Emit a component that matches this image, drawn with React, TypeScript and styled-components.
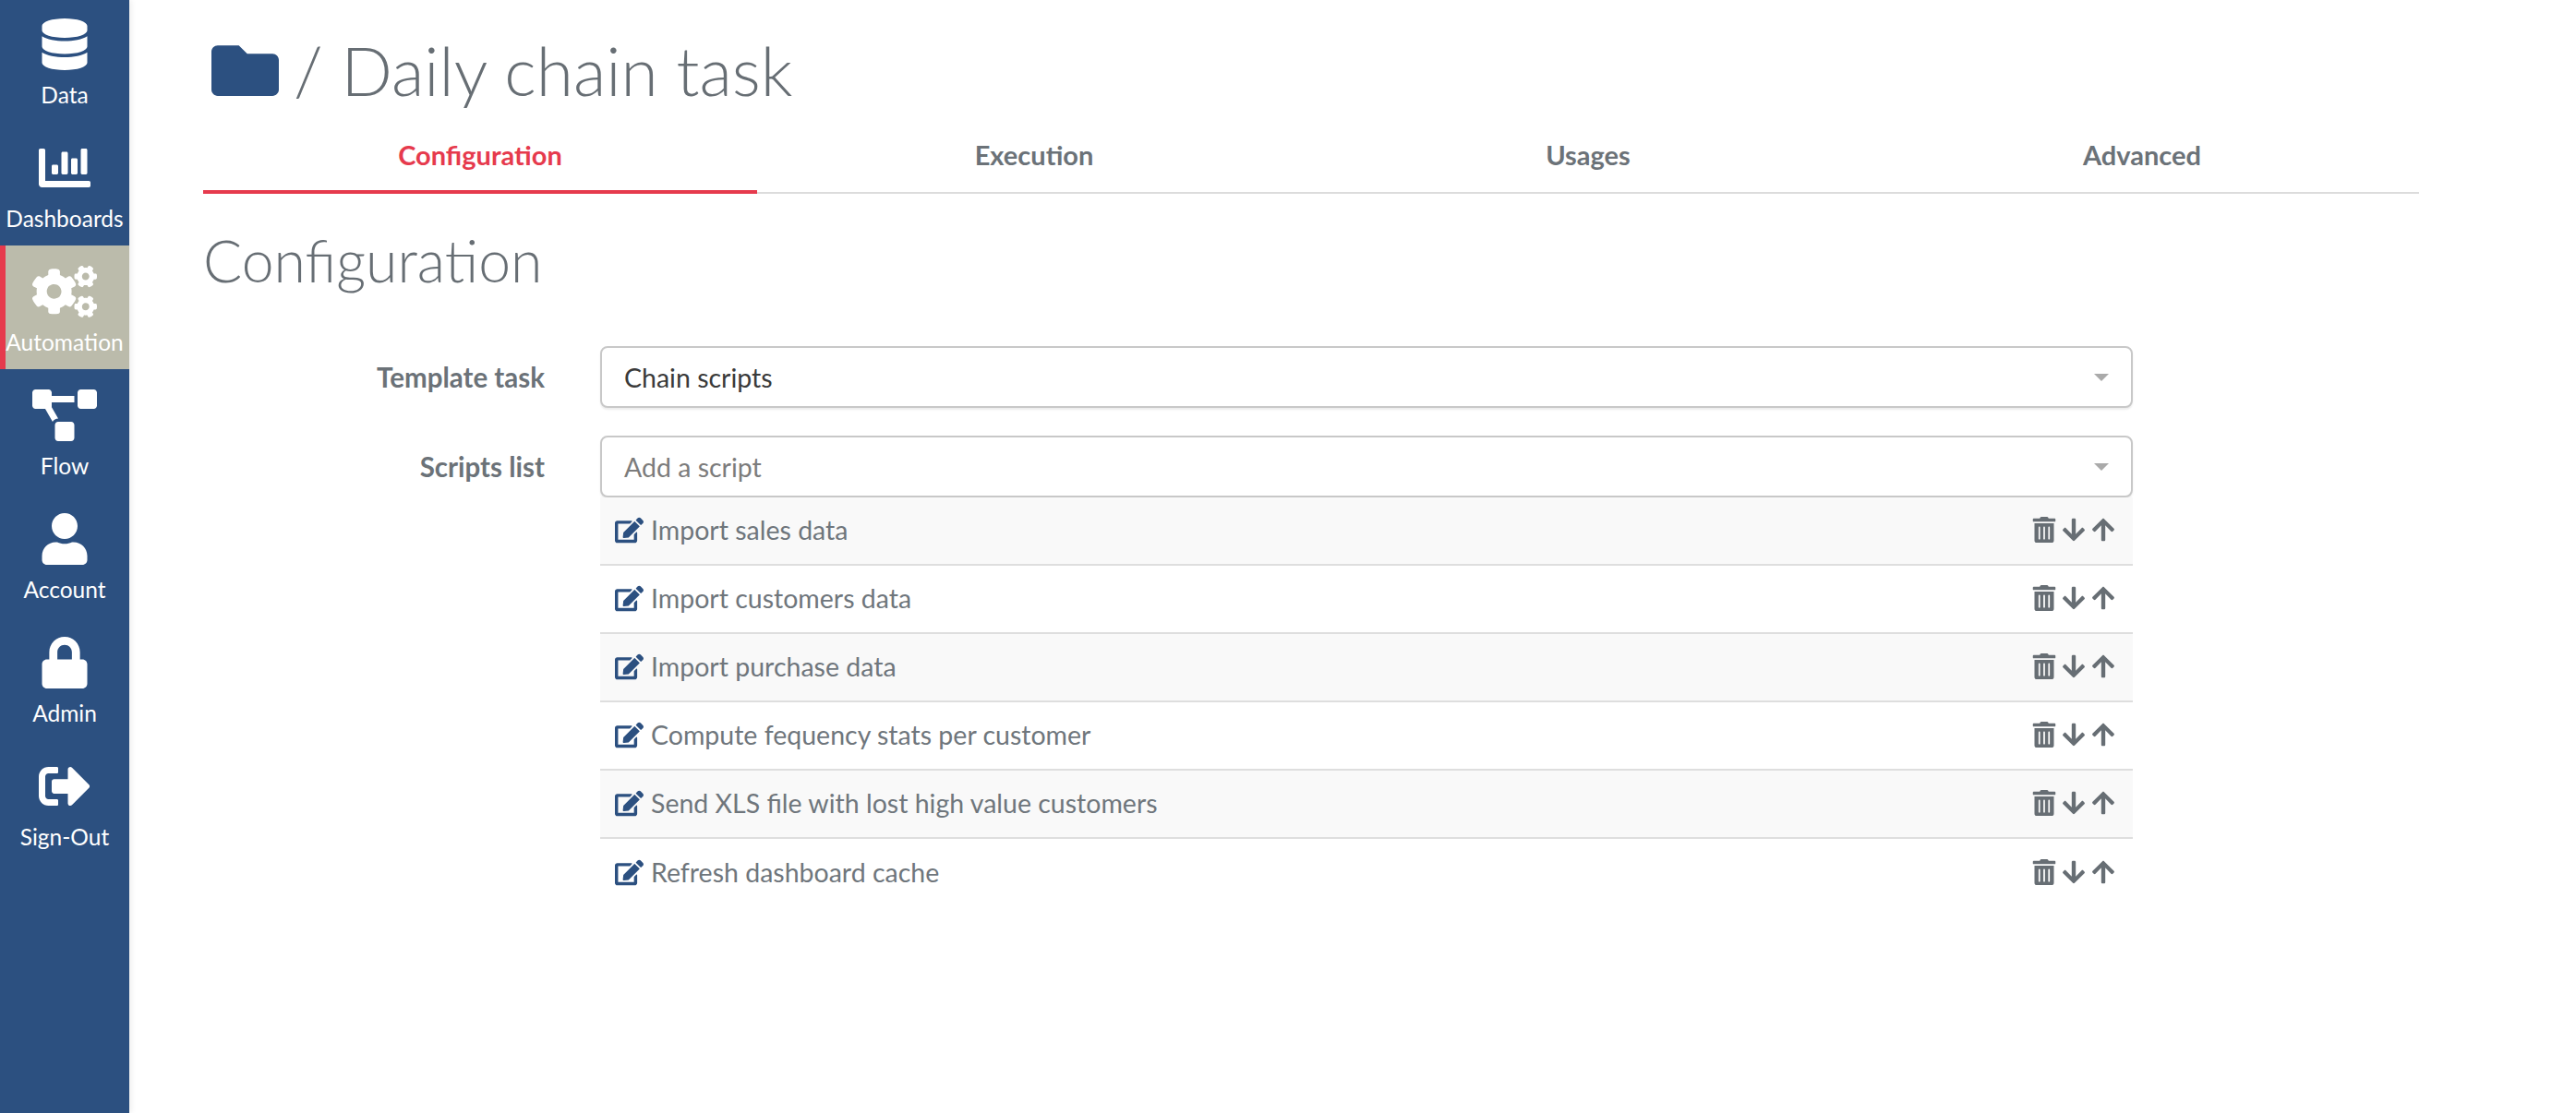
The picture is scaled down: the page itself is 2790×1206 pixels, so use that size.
import React from 'react';
import styled, { createGlobalStyle } from 'styled-components';
import {
  FaArrowDown,
  FaArrowUp,
  FaChartBar,
  FaCogs,
  FaDatabase,
  FaEdit,
  FaFolder,
  FaLock,
  FaProjectDiagram,
  FaSignOutAlt,
  FaTrashAlt,
  FaUser,
} from 'react-icons/fa';

const GlobalStyle = createGlobalStyle`
  html, body {
    margin: 0;
    padding: 0;
    background: #fff;
    font-family: Lato, "Open Sans", sans-serif;
    overflow: hidden;
  }
  * { box-sizing: border-box; }
`;

const Page = styled.div`
  display: flex;
  height: 1206px;
  width: 2790px;
`;

const Sidebar = styled.nav`
  width: 140px;
  flex-shrink: 0;
  background: #2c5080;
  box-shadow: 2px 0 6px rgba(0, 0, 0, 0.08);
  display: flex;
  flex-direction: column;
  overflow: hidden;
`;

const NavList = styled.div`
  display: flex;
  flex-direction: column;
  margin-top: -2px;
`;

const NavItem = styled.a<{ $active?: boolean }>`
  height: 134px;
  flex-shrink: 0;
  display: flex;
  flex-direction: column;
  align-items: center;
  padding-top: 20px;
  color: #fff;
  font-size: 24.5px;
  line-height: 30px;
  white-space: nowrap;
  background: ${({ $active }) => ($active ? '#bbbbab' : 'transparent')};
  border-left: ${({ $active }) => ($active ? '6px solid #e63a4d' : 'none')};
  padding-right: ${({ $active }) => ($active ? '6px' : '0')};
`;

const NavIcon = styled.span<{ $wide?: boolean }>`
  height: 60px;
  margin-bottom: 10px;
  display: flex;
  align-items: center;
  justify-content: center;
  font-size: ${({ $wide }) => ($wide ? '70px' : '56px')};
`;

const Main = styled.main`
  flex: 1;
  padding-left: 80px;
`;

const Title = styled.h1`
  margin: 0;
  height: 120px;
  padding: 32px 0 0 9px;
  display: flex;
  align-items: center;
  gap: 16px;
  font-size: 73px;
  line-height: 84px;
  font-weight: 300;
  color: #676e74;
`;

const FolderIcon = styled(FaFolder)`
  color: #2c5080;
  font-size: 73px;
`;

const Tabs = styled.div`
  width: 2400px;
  height: 90px;
  display: grid;
  grid-template-columns: repeat(4, 1fr);
  border-bottom: 2px solid #dcdcdc;
`;

const Tab = styled.div<{ $active?: boolean }>`
  height: 90px;
  padding: 8px 0 ${({ $active }) => ($active ? '0' : '4px')};
  display: flex;
  align-items: center;
  justify-content: center;
  font-size: 29px;
  font-weight: 700;
  color: ${({ $active }) => ($active ? '#e63a4d' : '#6b7278')};
  border-bottom: ${({ $active }) => ($active ? '4px solid #e63a4d' : 'none')};
`;

const Heading = styled.h2`
  margin: 40px 0 61px;
  font-size: 62.5px;
  line-height: 64px;
  font-weight: 300;
  color: #676e74;
`;

const FormRow = styled.div`
  display: flex;
  align-items: flex-start;
  margin-bottom: 30px;
`;

const Label = styled.label`
  width: 370px;
  height: 66px;
  margin-right: 60px;
  display: flex;
  align-items: center;
  justify-content: flex-end;
  font-size: 29.5px;
  font-weight: 700;
  color: #6b7278;
`;

const Field = styled.div`
  width: 1660px;
`;

const Select = styled.div<{ $placeholder?: boolean }>`
  height: 67px;
  padding: 0 24px;
  display: flex;
  align-items: center;
  justify-content: space-between;
  background: #fff;
  border: 2px solid #c8c8c8;
  border-radius: 8px;
  box-shadow: 0 2px 2px rgba(0, 0, 0, 0.08);
  font-size: 28.5px;
  color: ${({ $placeholder }) => ($placeholder ? '#7c7c7c' : '#3a3a3a')};
`;

const Caret = styled.span`
  width: 0;
  height: 0;
  border-left: 8px solid transparent;
  border-right: 8px solid transparent;
  border-top: 8px solid #aaa;
`;

const ScriptRow = styled.div<{ $striped: boolean }>`
  height: 74px;
  padding: 0 18px 2px 16px;
  display: flex;
  align-items: center;
  justify-content: space-between;
  background: ${({ $striped }) => ($striped ? '#f9f9f9' : '#fff')};
  border-bottom: 2px solid #dedede;
  font-size: 28.5px;
  color: #6f767c;

  &:last-child {
    border-bottom: none;
  }
`;

const ScriptName = styled.div`
  display: flex;
  align-items: center;
  gap: 8px;
`;

const EditIcon = styled(FaEdit)`
  color: #2c5080;
  font-size: 31px;
`;

const Actions = styled.div`
  display: flex;
  align-items: center;
  gap: 4px;
  font-size: 28px;
  color: #676e74;
`;

const navItems = [
  { label: 'Data', icon: <FaDatabase /> },
  { label: 'Dashboards', icon: <FaChartBar /> },
  { label: 'Automation', icon: <FaCogs />, active: true, wide: true },
  { label: 'Flow', icon: <FaProjectDiagram />, wide: true },
  { label: 'Account', icon: <FaUser /> },
  { label: 'Admin', icon: <FaLock /> },
  { label: 'Sign-Out', icon: <FaSignOutAlt /> },
];

const tabs = ['Configuration', 'Execution', 'Usages', 'Advanced'];

const scripts = [
  'Import sales data',
  'Import customers data',
  'Import purchase data',
  'Compute fequency stats per customer',
  'Send XLS file with lost high value customers',
  'Refresh dashboard cache',
];

export default function App() {
  return (
    <Page>
      <GlobalStyle />
      <Sidebar>
        <NavList>
          {navItems.map((item) => (
            <NavItem key={item.label} $active={item.active}>
              <NavIcon $wide={item.wide}>{item.icon}</NavIcon>
              {item.label}
            </NavItem>
          ))}
        </NavList>
      </Sidebar>
      <Main>
        <Title>
          <FolderIcon />
          <span>/ Daily chain task</span>
        </Title>
        <Tabs>
          {tabs.map((tab, i) => (
            <Tab key={tab} $active={i === 0}>
              {tab}
            </Tab>
          ))}
        </Tabs>
        <Heading>Configuration</Heading>
        <FormRow>
          <Label>Template task</Label>
          <Field>
            <Select>
              Chain scripts
              <Caret />
            </Select>
          </Field>
        </FormRow>
        <FormRow>
          <Label>Scripts list</Label>
          <Field>
            <Select $placeholder>
              Add a script
              <Caret />
            </Select>
            {scripts.map((name, i) => (
              <ScriptRow key={name} $striped={i % 2 === 0}>
                <ScriptName>
                  <EditIcon />
                  {name}
                </ScriptName>
                <Actions>
                  <FaTrashAlt />
                  <FaArrowDown />
                  <FaArrowUp />
                </Actions>
              </ScriptRow>
            ))}
          </Field>
        </FormRow>
      </Main>
    </Page>
  );
}
